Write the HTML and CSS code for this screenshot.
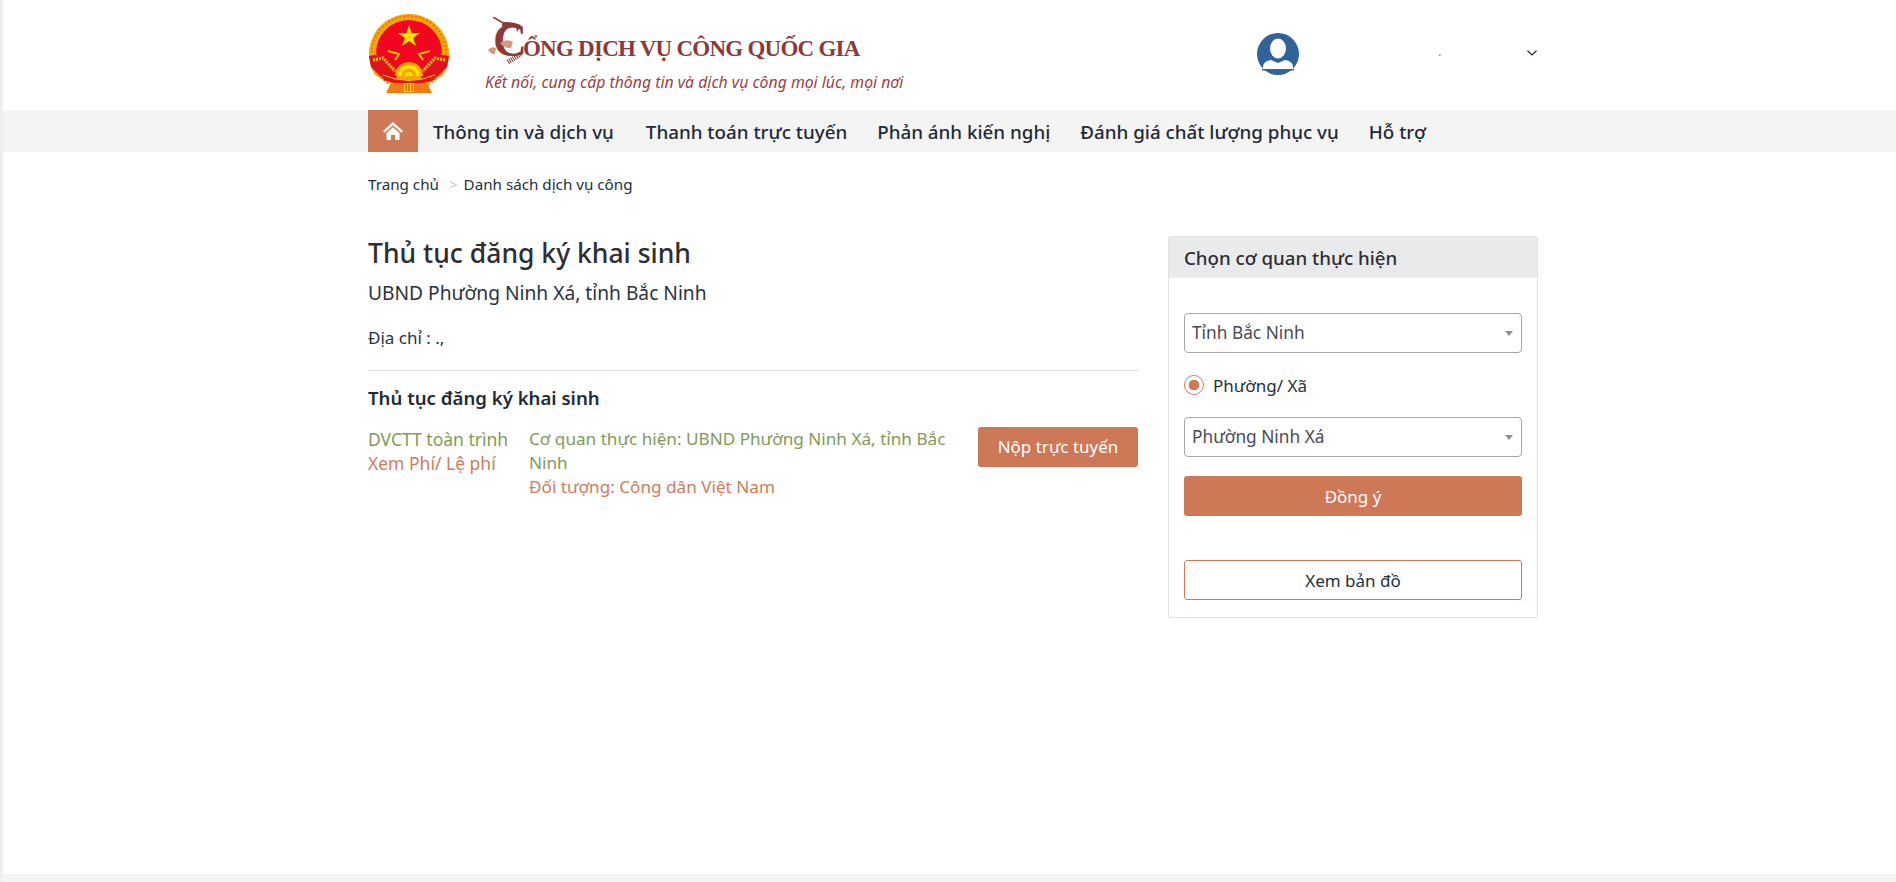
FILE: index.html
```html
<!DOCTYPE html>
<html lang="vi">
<head>
<meta charset="utf-8">
<title>Thủ tục đăng ký khai sinh</title>
<link rel="stylesheet" href="styles.css">
</head>
<body>
<div class="page">
  <header class="top">
    <div class="wrap top-in">
      <svg class="emblem" viewBox="0 0 82 80" aria-hidden="true">
        <path d="M7 62A40 40 0 1 1 75 62L62 70H20Z" fill="#f6a800"/>
        <circle cx="41" cy="40" r="37" fill="none" stroke="#e8641a" stroke-width="1.500" stroke-dasharray="2 2"/>
        <path d="M8 40A33 33 0 0 1 74 40L68 50 50 56H32L14 50Z" fill="#f2051f"/>
        <path d="M41 12l2.600 8h8.500l-6.900 5 2.700 8-6.900-5-6.900 5 2.700-8-6.900-5h8.500z" fill="#ffe100"/>
        <path d="M1 43 12 41 22 47 33 54 27 68 12 63 3 54Z" fill="#e0121c"/>
        <path d="M81 43 70 41 60 47 49 54 55 68 70 63 79 54Z" fill="#e0121c"/>
        <path d="M5 47 15 45 27 58M77 47 67 45 55 58" fill="none" stroke="#f9c400" stroke-width="3" stroke-dasharray="2 1"/>
        <path d="M20 38l11 3-4 6M62 38l-11 3 4 6" fill="none" stroke="#f9c400" stroke-width="2"/>
        <path d="M27 63A14 14 0 0 1 55 63Z" fill="#f7a400"/>
        <path d="M30 63A11 11 0 0 1 52 63Z" fill="#ffe100"/>
        <path d="M33.500 63A7.500 7.500 0 0 1 48.500 63Z" fill="#f7a400"/>
        <path d="M37 63A4 4 0 0 1 45 63Z" fill="#ffe100"/>
        <path d="M12 60Q41 74 70 60L66 67Q41 76 16 67Z" fill="#e0121c"/>
        <path d="M15 62Q41 73 67 62" fill="none" stroke="#fc0" stroke-width="1"/>
        <path d="M23 70H59L64 80H18Z" fill="#f47a12"/>
        <rect x="36" y="70" width="10" height="9" fill="#fd0"/>
        <path d="M38 71v7M41 71v7M44 71v7" stroke="#e0121c" stroke-width="1"/>
      </svg>
      <div class="brand">
        <div class="brand-title">
          <span class="cap">C</span><span class="rest">ỔNG DỊCH VỤ CÔNG QUỐC GIA</span>
          <svg class="bird" viewBox="0 0 40 48" aria-hidden="true">
            <path d="M5 0 17 7" fill="none" stroke="#8a3a36" stroke-width="1.500"/>
            <circle cx="17" cy="8" r="3" fill="#8a3a36"/>
            <path d="M17 5Q26 5 33 8L29 15 28 10Q22 9 16 11Z" fill="#8a3a36"/>
            <path d="M12 26Q18 21 25 25L23 31Q17 32 12 26Z" fill="#d59a7e"/>
            <path d="M0 33Q3 29 8 31L7 37Q3 38 0 33Z" fill="#d59a7e"/>
            <path d="M20 45 33 37" fill="none" stroke="#8a3a36" stroke-width="5" stroke-dasharray="1 1"/>
          </svg>
        </div>
        <div class="brand-sub">Kết nối, cung cấp thông tin và dịch vụ công mọi lúc, mọi nơi</div>
      </div>
      <div class="user">
        <svg class="avatar" viewBox="0 0 42 42" aria-hidden="true">
          <circle cx="21" cy="21" r="21" fill="#2f6399"/>
          <ellipse cx="21" cy="15.500" rx="8" ry="10" fill="#fff"/>
          <path d="M6 37V33Q7 28 14 27L21 30 28 27Q35 28 36 33V37Z" fill="#fff"/>
          <rect x="5" y="36" width="32" height="1.500" fill="#2f6399"/>
        </svg>
        <span class="user-dot">.</span>
        <svg class="chev" viewBox="0 0 10 6" aria-hidden="true"><path d="M.5.700 5 5 9.500.700" fill="none" stroke="#1d2b3a" stroke-width="1.200"/></svg>
      </div>
    </div>
  </header>

  <nav class="nav">
    <div class="wrap nav-in">
      <a class="home">
        <svg viewBox="0 0 20 18" aria-hidden="true"><path d="M10 0 20 9l-1.500 1.700L10 3.200 1.500 10.700 0 9ZM3.500 11 10 5.300 16.500 11v7H12v-5H8v5H3.500Z" fill="#fff"/></svg>
      </a>
      <a class="nav-link nav-first">Thông tin và dịch vụ</a>
      <a class="nav-link">Thanh toán trực tuyến</a>
      <a class="nav-link">Phản ánh kiến nghị</a>
      <a class="nav-link">Đánh giá chất lượng phục vụ</a>
      <a class="nav-link">Hỗ trợ</a>
    </div>
  </nav>

  <main class="wrap">
    <div class="crumbs"><span>Trang chủ</span><span class="sep">&gt;</span><span>Danh sách dịch vụ công</span></div>
    <div class="cols">
      <section class="left">
        <h1 class="title">Thủ tục đăng ký khai sinh</h1>
        <p class="agency">UBND Phường Ninh Xá, tỉnh Bắc Ninh</p>
        <p class="addr">Địa chỉ : .,</p>
        <hr class="rule">
        <h3 class="proc">Thủ tục đăng ký khai sinh</h3>
        <div class="proc-row">
          <div class="proc-a">
            <div class="green">DVCTT toàn trình</div>
            <div class="orange">Xem Phí/ Lệ phí</div>
          </div>
          <div class="proc-b">
            <div class="green">Cơ quan thực hiện: UBND Phường Ninh Xá, tỉnh Bắc Ninh</div>
            <div class="orange">Đối tượng: Công dân Việt Nam</div>
          </div>
          <a class="btn btn-submit">Nộp trực tuyến</a>
        </div>
      </section>
      <aside class="panel">
        <div class="panel-head">Chọn cơ quan thực hiện</div>
        <div class="panel-body">
          <div class="select">Tỉnh Bắc Ninh</div>
          <label class="radio"><span class="radio-mark"></span>Phường/ Xã</label>
          <div class="select">Phường Ninh Xá</div>
          <a class="btn btn-ok">Đồng ý</a>
          <a class="btn btn-map">Xem bản đồ</a>
        </div>
      </aside>
    </div>
  </main>
  <div class="grow"></div>
  <div class="foot"></div>
</div>
</body>
</html>
```
FILE: styles.css
```css
* { box-sizing: border-box; }
html, body { margin: 0; height: 100%; }
body { font-family: "Noto Sans", "Open Sans", sans-serif; color: #212b36; background: #fff; overflow: hidden; }
.page { height: 882px; border-left: 3px solid #f0f0f0; display: flex; flex-direction: column; }
.wrap { width: 1170px; margin-left: 365px; }
.top { height: 110px; flex: none; }
.top-in { display: flex; height: 110px; position: relative; }
.emblem { width: 82px; height: 80px; margin-top: 13px; flex: none; }
.brand { margin-left: 35px; padding-top: 15px; flex: none; width: 772px; }
.brand-title { display: flex; align-items: baseline; height: 50px; position: relative; color: #8a3a3a; font-family: "Liberation Serif", serif; font-weight: 700; }
.bird { position: absolute; left: 3px; top: 2px; width: 40px; height: 48px; }
.cap { font-size: 47px; line-height: 50px; margin-left: 8px; color: #8a3a36; }
.rest { font-size: 23px; letter-spacing: -.75px; margin-left: -4px; }
.brand-sub { font-size: 15.8px; line-height: 20px; font-style: italic; color: #9b4141; margin-top: 7px; white-space: nowrap; }
.user { display: flex; padding-top: 33px; flex: 1; position: relative; height: 110px; }
.avatar { width: 42px; height: 42px; flex: none; }
.user-dot { font-size: 13px; color: #8a8a8a; line-height: 16px; margin-left: 139px; margin-top: 10px; }
.chev { width: 10px; height: 6px; margin-left: 86px; margin-top: 17px; flex: none; }
.nav { background: #f4f4f4; height: 42px; flex: none; }
.nav-in { display: flex; height: 42px; align-items: center; gap: 30px; }
.home { width: 50px; height: 42px; background: #cd7957; display: flex; align-items: center; justify-content: center; margin-right: -15px; }
.home svg { width: 20px; height: 18px; }
.nav-link { font-size: 18.8px; font-weight: 500; color: #1e2a38; white-space: nowrap; margin-top: 1px; }
.nav-first { margin-right: 2px; }
.crumbs { display: flex; font-size: 15.2px; line-height: 20px; margin-top: 22px; color: #22303e; }
.sep { color: #c8c8c8; margin: 0 6px 0 10px; }
.cols { display: flex; justify-content: space-between; margin-top: 33px; }
.left { width: 770px; }
.title { margin: 9px 0 0; font-size: 26.5px; line-height: 34px; font-weight: 500; color: #2d2d33; }
.agency { margin: 9px 0 0; font-size: 19.2px; line-height: 28px; color: #2a3340; }
.addr { margin: 19px 0 0; font-size: 17px; line-height: 24px; color: #2a3340; }
.rule { margin: 20px 0 0; border: 0; border-top: 1px solid #e2e2e2; }
.proc { margin: 14px 0 0; font-size: 18.6px; line-height: 26px; font-weight: 600; color: #212b36; }
.proc-row { display: flex; margin-top: 16px; font-size: 17.15px; line-height: 24px; align-items: flex-start; }
.proc-a { width: 161px; flex: none; font-size: 17.5px; }
.proc-b { width: 449px; flex: none; }
.green { color: #7f9a58; }
.orange { color: #cf7c5c; }
.btn { display: flex; align-items: center; justify-content: center; border-radius: 3px; font-size: 17px; }
.btn-submit { width: 160px; height: 40px; background: #cd7957; color: #fff; flex: none; }
.panel { width: 370px; height: 382px; margin-top: 9px; border: 1px solid #e2e2e2; border-radius: 3px; flex: none; }
.panel-head { height: 41px; background: #e9eaec; font-size: 18.7px; line-height: 41px; padding-left: 15px; font-weight: 500; color: #2d2d33; }
.panel-body { padding: 35px 15px 0; }
.select { height: 40px; border: 1px solid #a6a6a6; border-radius: 4px; font-size: 17.3px; line-height: 38px; padding-left: 7px; color: #4a4a55; position: relative; }
.select::after { content: ""; position: absolute; right: 8px; top: 17px; border: 4px solid transparent; border-top: 5px solid #8c8c8c; border-bottom: 0; }
.radio { display: flex; align-items: center; height: 24px; margin: 20px 0; font-size: 17px; color: #22303e; }
.radio-mark { width: 20px; height: 20px; border: 1px solid #cf7c5c; border-radius: 50%; margin-right: 9px; flex: none; background: radial-gradient(circle, #cd7957 0 5px, transparent 5.500px); }
.btn-ok { height: 40px; background: #cd7957; color: #fff; margin-top: 19px; }
.btn-map { height: 40px; border: 1px solid #cd7957; color: #22303e; margin-top: 44px; }
.grow { flex: 1; }
.foot { height: 8px; background: #f4f4f4; flex: none; }
```
